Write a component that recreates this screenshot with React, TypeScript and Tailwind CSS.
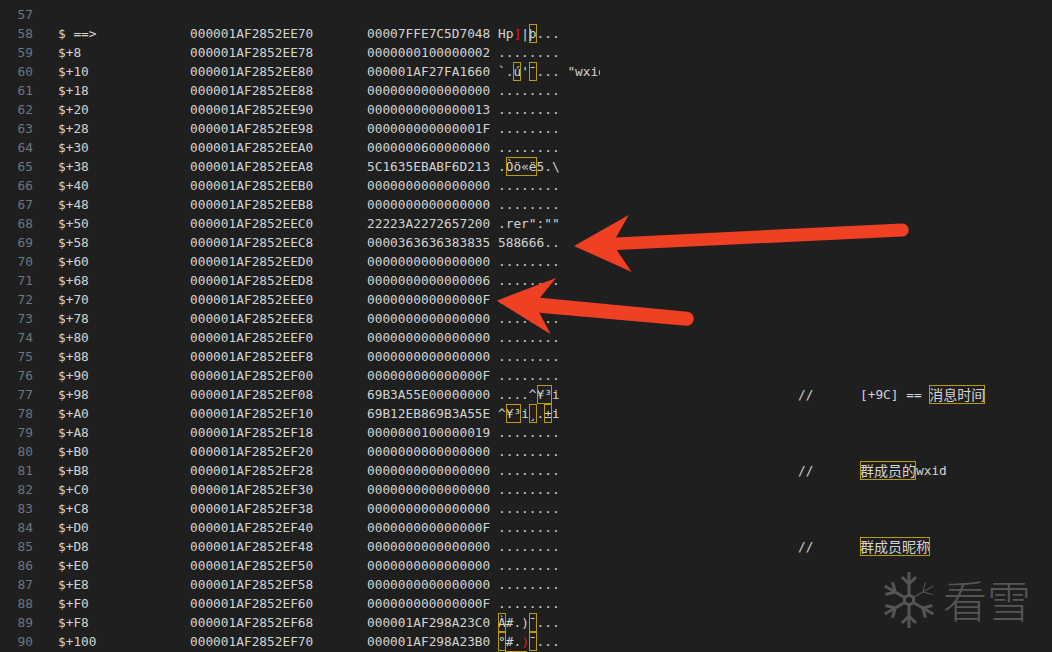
import React from 'react';

const Box = ({ children }: { children: React.ReactNode }) => (
  <span className="inline-block h-[19px] align-top outline outline-1 -outline-offset-1 outline-[#bd9b03]">{children}</span>
);
const Red = ({ children }: { children: React.ReactNode }) => <span className="text-[#e51400]">{children}</span>;
const Cjk = ({ children }: { children: React.ReactNode }) => (
  <span className="font-['Noto_Sans_CJK_SC',sans-serif] text-[14px]">{children}</span>
);

const Z = '0000000000000000';
const DOTS = '........';

type Row = {
  n: number;
  off: string;
  addr: string;
  val: string;
  ascii?: React.ReactNode;
  note?: React.ReactNode;
};

const rows: Row[] = [
  { n: 58, off: '$ ==>', addr: 'EE70', val: '00007FFE7C5D7048', ascii: <>Hp<Red>]</Red>|<Box>þ</Box>...</> },
  { n: 59, off: '$+8', addr: 'EE78', val: '0000000100000002' },
  { n: 60, off: '$+10', addr: 'EE80', val: '000001AF27FA1660', ascii: <>`.<Box>ú</Box>'<Box>¯</Box>... "wxid</> },
  { n: 61, off: '$+18', addr: 'EE88', val: Z },
  { n: 62, off: '$+20', addr: 'EE90', val: '0000000000000013' },
  { n: 63, off: '$+28', addr: 'EE98', val: '000000000000001F' },
  { n: 64, off: '$+30', addr: 'EEA0', val: '0000000600000000' },
  { n: 65, off: '$+38', addr: 'EEA8', val: '5C1635EBABF6D213', ascii: <>.<Box>Òö«ë</Box>5.\</> },
  { n: 66, off: '$+40', addr: 'EEB0', val: Z },
  { n: 67, off: '$+48', addr: 'EEB8', val: Z },
  { n: 68, off: '$+50', addr: 'EEC0', val: '22223A2272657200', ascii: '.rer":""' },
  { n: 69, off: '$+58', addr: 'EEC8', val: '0000363636383835', ascii: '588666..' },
  { n: 70, off: '$+60', addr: 'EED0', val: Z },
  { n: 71, off: '$+68', addr: 'EED8', val: '0000000000000006' },
  { n: 72, off: '$+70', addr: 'EEE0', val: '000000000000000F' },
  { n: 73, off: '$+78', addr: 'EEE8', val: Z },
  { n: 74, off: '$+80', addr: 'EEF0', val: Z },
  { n: 75, off: '$+88', addr: 'EEF8', val: Z },
  { n: 76, off: '$+90', addr: 'EF00', val: '000000000000000F' },
  {
    n: 77, off: '$+98', addr: 'EF08', val: '69B3A55E00000000',
    ascii: <>....^<Box>¥³</Box>i</>,
    note: <>[+9C] == <Box><Cjk>消息时间</Cjk></Box></>,
  },
  { n: 78, off: '$+A0', addr: 'EF10', val: '69B12EB869B3A55E', ascii: <>^<Box>¥³</Box>i<Box>¸</Box>.<Box>±</Box>i</> },
  { n: 79, off: '$+A8', addr: 'EF18', val: '0000000100000019' },
  { n: 80, off: '$+B0', addr: 'EF20', val: Z },
  { n: 81, off: '$+B8', addr: 'EF28', val: Z, note: <><Box><Cjk>群成员的</Cjk></Box>wxid</> },
  { n: 82, off: '$+C0', addr: 'EF30', val: Z },
  { n: 83, off: '$+C8', addr: 'EF38', val: Z },
  { n: 84, off: '$+D0', addr: 'EF40', val: '000000000000000F' },
  { n: 85, off: '$+D8', addr: 'EF48', val: Z, note: <Box><Cjk>群成员昵称</Cjk></Box> },
  { n: 86, off: '$+E0', addr: 'EF50', val: Z },
  { n: 87, off: '$+E8', addr: 'EF58', val: Z },
  { n: 88, off: '$+F0', addr: 'EF60', val: '000000000000000F' },
  { n: 89, off: '$+F8', addr: 'EF68', val: '000001AF298A23C0', ascii: <><Box>À</Box>#.)<Box>¯</Box>...</> },
  { n: 90, off: '$+100', addr: 'EF70', val: '000001AF298A23B0', ascii: <><Box>°</Box>#.<Red>)</Red><Box>¯</Box>...</> },
];

const Line = ({ n, children }: { n: number; children?: React.ReactNode }) => (
  <div className="flex h-[19px] leading-[19px] whitespace-pre">
    <div className="w-[33px] mr-[25px] text-right text-[#6e7681]">{n}</div>
    {children}
  </div>
);

const Flake = () => (
  <svg width="60" height="60" viewBox="0 0 60 60" fill="none" stroke="#555555" strokeWidth="3">
    <polygon points="30,25 34.5,27.5 34.5,32.5 30,35 25.5,32.5 25.5,27.5" />
    {[0, 120, 180, 240, 300].map(a => (
      <g key={a} transform={`rotate(${a} 30 30)`}>
        <path d="M30 25V2" />
        <path d="M23 7l7 7 7-7" />
      </g>
    ))}
    <g transform="rotate(60 30 30)" strokeWidth="1">
      <path d="M30 25V2M23 7l7 7 7-7" />
    </g>
  </svg>
);

export default function App() {
  return (
    <div className="relative w-[1052px] h-[652px] overflow-hidden bg-[#1f1f1f] pt-[5px] text-[#d4d4d4] font-['DejaVu_Sans_Mono',monospace] text-[12.8px]">
      <Line n={57} />
      {rows.map(r => (
        <Line key={r.n} n={r.n}>
          <div className="w-[132px]">{r.off}</div>
          <div className="w-[177px]">000001AF2852{r.addr}</div>
          <div className="w-[131px]">{r.val}</div>
          <div className="w-[102px] overflow-hidden">{r.ascii ?? DOTS}</div>
          {r.note && (
            <>
              <div className="w-[198px]" />
              <div className="w-[62px]">//</div>
              <div>{r.note}</div>
            </>
          )}
        </Line>
      ))}
      {/* top edge of the next row's highlight, the row itself is off screen */}
      <div className="ml-[505px] w-[22px] border-t border-[#bd9b03]" />

      {/* red arrows pasted over the listing */}
      <svg className="absolute left-0 top-0" width="1052" height="652" viewBox="0 0 1052 652" fill="#ef4023">
        <path d="M574 246L628.7 215L616 237.5L902 223.5A6.5 6.5 0 0 1 902.5 236.5L616.7 250L631.7 272Z" />
        <path d="M496.7 300.7L556 278L540 297.7L687.5 311.7A7 7 0 0 1 686 325.7L539.3 312.7L550.7 334.3Z" />
      </svg>

      {/* watermark */}
      <div className="absolute left-[879px] top-[570px] flex items-center gap-[4px]">
        <Flake />
        <span className="-mt-[2px] font-['Noto_Sans_CJK_SC',sans-serif] font-light text-[44px] leading-[60px] text-[#555555]">看雪</span>
      </div>
    </div>
  );
}
